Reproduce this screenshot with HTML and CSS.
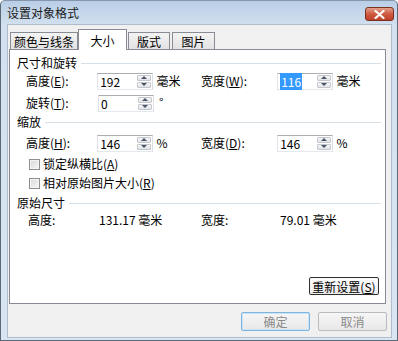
FILE: index.html
```html
<!DOCTYPE html>
<html lang="zh-CN">
<head>
    <meta charset="UTF-8">
    <title>设置对象格式</title>
    <link rel="stylesheet" href="styles.css">
</head>
<body>
    <div class="window">
        <div class="titlebar">
            <span class="title">设置对象格式</span>
            <span class="close">
                <svg width="11" height="9" viewBox="0 0 11 9">
                    <path d="M1.5 1 L9.5 8 M9.5 1 L1.5 8" stroke="#fff" stroke-width="2.2" stroke-linecap="round"/>
                </svg>
            </span>
        </div>

        <div class="client">
            <!-- вкладки -->
            <div class="tabs">
                <div class="tab tab-colors">颜色与线条</div>
                <div class="tab active">大小</div>
                <div class="tab tab-layout">版式</div>
                <div class="tab tab-picture">图片</div>
            </div>

            <div class="panel">
                <div class="group">尺寸和旋转</div>
                <div class="row row-first">
                    <span class="label">高度(<u>E</u>):</span>
                    <span class="spin"><span class="val">192</span><span class="arrows"><i class="up"></i><i class="down"></i></span></span>
                    <span class="unit">毫米</span>
                    <span class="label label-right">宽度(<u>W</u>):</span>
                    <span class="spin"><span class="val"><span class="sel">116</span></span><span class="arrows"><i class="up"></i><i class="down"></i></span></span>
                    <span class="unit">毫米</span>
                </div>
                <div class="row row-rotate">
                    <span class="label">旋转(<u>T</u>):</span>
                    <span class="spin"><span class="val">0</span><span class="arrows"><i class="up"></i><i class="down"></i></span></span>
                    <span class="unit unit-deg">°</span>
                </div>

                <div class="group group-scale">缩放</div>
                <div class="row row-scale">
                    <span class="label">高度(<u>H</u>):</span>
                    <span class="spin"><span class="val">146</span><span class="arrows"><i class="up"></i><i class="down"></i></span></span>
                    <span class="unit">%</span>
                    <span class="label label-right">宽度(<u>D</u>):</span>
                    <span class="spin"><span class="val">146</span><span class="arrows"><i class="up"></i><i class="down"></i></span></span>
                    <span class="unit">%</span>
                </div>
                <div class="row check-row check-lock">
                    <span class="check"></span>
                    <span>锁定纵横比(<u>A</u>)</span>
                </div>
                <div class="row check-row check-relative">
                    <span class="check"></span>
                    <span>相对原始图片大小(<u>R</u>)</span>
                </div>

                <div class="group group-original">原始尺寸</div>
                <div class="row row-original">
                    <span class="orig-label">高度:</span>
                    <span class="orig-value">131.17 毫米</span>
                    <span class="orig-label orig-label-right">宽度:</span>
                    <span>79.01 毫米</span>
                </div>

                <div class="panel-actions">
                    <button class="btn btn-reset">重新设置(<u>S</u>)</button>
                </div>
            </div>

            <div class="footer">
                <button class="btn btn-ok">确定</button>
                <button class="btn btn-cancel">取消</button>
            </div>
        </div>
    </div>
</body>
</html>
```

FILE: styles.css
```css
* {
    box-sizing: border-box;
}
body {
    margin: 0;
    font-family: "Noto Sans CJK SC", "Noto Sans", sans-serif;
    font-size: 12px;
    color: #000;
    background: #fff;
}
.window {
    width: 398px;
    height: 341px;
    border: 1px solid #5d6875;
    border-top-color: #8396ab;
    border-radius: 5px 5px 0 0;
    background: linear-gradient(#b9cee6, #d2e0ef 24px, #d9e5f2);
    display: flex;
    flex-direction: column;
}
.titlebar {
    height: 22px;
    display: flex;
    align-items: center;
    padding: 0 3px 0 6px;
}
.title {
    line-height: 14px;
    margin-top: 2px;
    color: #1b1b1b;
}
.close {
    margin-left: auto;
    margin-top: 4px;
    width: 29px;
    height: 14px;
    border: 1px solid #7a2f21;
    border-radius: 3px;
    background: linear-gradient(#e3a08e, #cf5a40 50%, #c0402a);
    display: flex;
    align-items: center;
    justify-content: center;
}
.client {
    flex: 1;
    margin: 1px 5px 2px 6px;
    background: #f0f0f0;
    border: 1px solid #aebccc;
    padding: 4px 4px 0 1px;
    display: flex;
    flex-direction: column;
}

/* вкладки */
.tabs {
    display: flex;
    align-items: flex-end;
    height: 20px;
    padding-left: 1px;
    position: relative;
    z-index: 1;
}
.tab {
    height: 17px;
    border: 1px solid #898c95;
    border-bottom: none;
    background: linear-gradient(#f3f3f3, #e2e2e2);
    padding-top: 2px;
    line-height: 14px;
    text-align: center;
}
.tab-colors {
    width: 68px;
}
.tab.active {
    width: 49px;
    height: 21px;
    margin-bottom: -1px;
    padding-top: 4px;
    background: #fff;
}
.tab-layout {
    width: 42px;
    margin-left: 1px;
}
.tab-picture {
    width: 43px;
    margin-left: 2px;
}

.panel {
    width: 377px;
    height: 255px;
    border: 1px solid #898c95;
    background: #fff;
    padding: 6px 4px 0 7px;
    display: flex;
    flex-direction: column;
}
.group {
    display: flex;
    align-items: center;
    height: 14px;
    line-height: 14px;
}
.group::after {
    content: "";
    flex: 1;
    height: 1px;
    margin-left: 4px;
    background: #d5dfe5;
}
.group-scale {
    margin-top: 3px;
}
.group-original {
    margin-top: 4px;
}
.row {
    display: flex;
    align-items: center;
    height: 18px;
    margin-left: 9px;
    line-height: 14px;
}
.row-first {
    margin-top: 2px;
}
.row-rotate {
    margin-top: 4px;
}
.row-scale {
    margin-top: 5px;
}
.check-lock {
    margin-top: 3px;
}
.check-relative {
    margin-top: 1px;
}
.row-original {
    margin-top: 1px;
}
.label {
    width: 72px;
}
.label-right {
    width: 77px;
}
.unit {
    width: 49px;
    padding-left: 4px;
}
.unit-deg {
    padding-left: 5px;
    margin-top: -2px;
}

/* поле со счётчиком */
.spin {
    width: 56px;
    height: 17px;
    border: 1px solid #abadb3;
    border-color: #abadb3 #dbdfe6 #e3e9ef #e2e3ea;
    background: #fff;
    display: flex;
}
.spin .val {
    flex: 1;
    padding-left: 2px;
    line-height: 15px;
}
.sel {
    background: #3399ff;
    color: #fff;
    padding: 0 1px;
}
.arrows {
    width: 15px;
    padding: 1px 1px 1px 0;
    display: flex;
    flex-direction: column;
    gap: 1px;
}
.arrows i {
    flex: 1;
    border: 1px solid #c5c8ce;
    border-radius: 1px;
    background: linear-gradient(#f7f7f7, #e1e3e6);
    display: flex;
    align-items: center;
    justify-content: center;
}
.arrows i::before {
    content: "";
    border-left: 3px solid transparent;
    border-right: 3px solid transparent;
}
.arrows .up::before {
    border-bottom: 3px solid #4a5668;
}
.arrows .down::before {
    border-top: 3px solid #4a5668;
}

.check-row {
    margin-left: 12px;
}
.check {
    width: 11px;
    height: 11px;
    margin-right: 3px;
    border: 1px solid #8e8f8f;
    background: linear-gradient(135deg, #d8d8d8, #f8f8f8);
    box-shadow: inset 0 0 0 1px #f4f4f4;
}

.orig-label {
    width: 73px;
    padding-left: 2px;
}
.orig-value {
    width: 102px;
}
.orig-label-right {
    width: 79px;
    padding-left: 0;
}

/* кнопки */
.btn {
    font-family: inherit;
    font-size: 12px;
    height: 19px;
    padding: 0;
    line-height: 15px;
    border-radius: 2px;
}
.panel-actions {
    margin-top: auto;
    margin-bottom: 8px;
    padding-right: 2px;
    display: flex;
    justify-content: flex-end;
}
.btn-reset {
    width: 70px;
    height: 18px;
    border: 1px solid #2f2f2f;
    background: linear-gradient(#fdfdfd, #ebebeb);
    color: #000;
}
.footer {
    display: flex;
    justify-content: flex-end;
    gap: 8px;
    margin-top: 8px;
}
.btn-ok,
.btn-cancel {
    width: 69px;
    color: #8a8a8a;
    background: linear-gradient(#f6f6f6, #e8e8e8);
}
.btn-ok {
    border: 1px solid #7fb4dc;
    box-shadow: inset 0 0 0 1px #c8e3f5;
}
.btn-cancel {
    border: 1px solid #b8bbc0;
}
```
